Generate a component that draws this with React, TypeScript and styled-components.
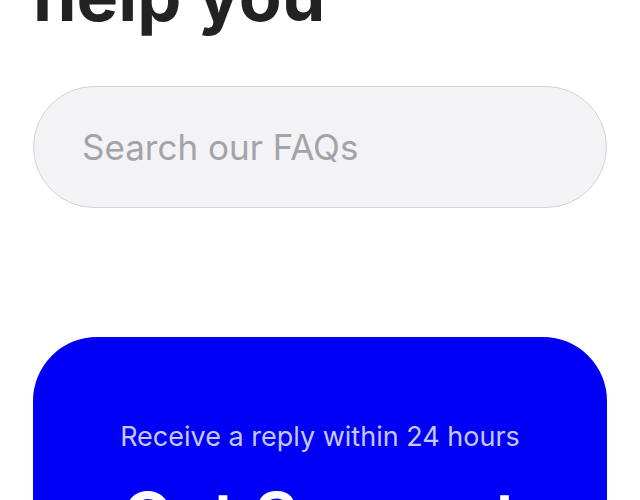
import React from "react";
import styled, { createGlobalStyle } from "styled-components";

const GlobalStyle = createGlobalStyle`
  html, body {
    margin: 0;
    padding: 0;
    background: #ffffff;
    overflow: hidden;
  }
  body {
    font-family: Inter, "Noto Sans", sans-serif;
  }
`;

const Page = styled.main`
  display: flex;
  flex-direction: column;
  padding: 0 33px;
  height: 500px;
  overflow: hidden;

  & > * {
    flex-shrink: 0;
  }
`;

const Heading = styled.h1`
  margin: -46px 0 0;
  font-family: Inter, "Noto Sans", sans-serif;
  font-weight: 700;
  font-size: 70px;
  line-height: 84px;
  color: #222222;
`;

const SearchBox = styled.input`
  margin-top: 48px;
  height: 122px;
  box-sizing: border-box;
  border: 1.5px solid #d4d4d9;
  border-radius: 61px;
  background: #f3f3f6;
  padding: 0 48px;
  font-family: Inter, "Noto Sans", sans-serif;
  font-size: 35px;
  color: #333;
  outline: none;

  &::placeholder {
    color: #a3a3a8;
  }
`;

const SupportCard = styled.section`
  margin-top: 129px;
  background: #0000f5;
  border-radius: 64px;
  padding: 83px 32px 60px;
  display: flex;
  flex-direction: column;
  align-items: center;
  text-align: center;
  color: #ffffff;
`;

const CardNote = styled.p`
  margin: 0;
  font-size: 27px;
  line-height: 34px;
  color: rgba(255, 255, 255, 0.78);
`;

const CardTitle = styled.h2`
  margin: 22px 0 0;
  font-size: 68px;
  line-height: 80px;
  font-weight: 600;
  color: #ffffff;
`;

export default function App(): JSX.Element {
  return (
    <>
      <GlobalStyle />
      <Page>
        <Heading>help you</Heading>
        <SearchBox type="text" placeholder="Search our FAQs" />
        <SupportCard>
          <CardNote>Receive a reply within 24 hours</CardNote>
          <CardTitle>Get Support</CardTitle>
        </SupportCard>
      </Page>
    </>
  );
}
